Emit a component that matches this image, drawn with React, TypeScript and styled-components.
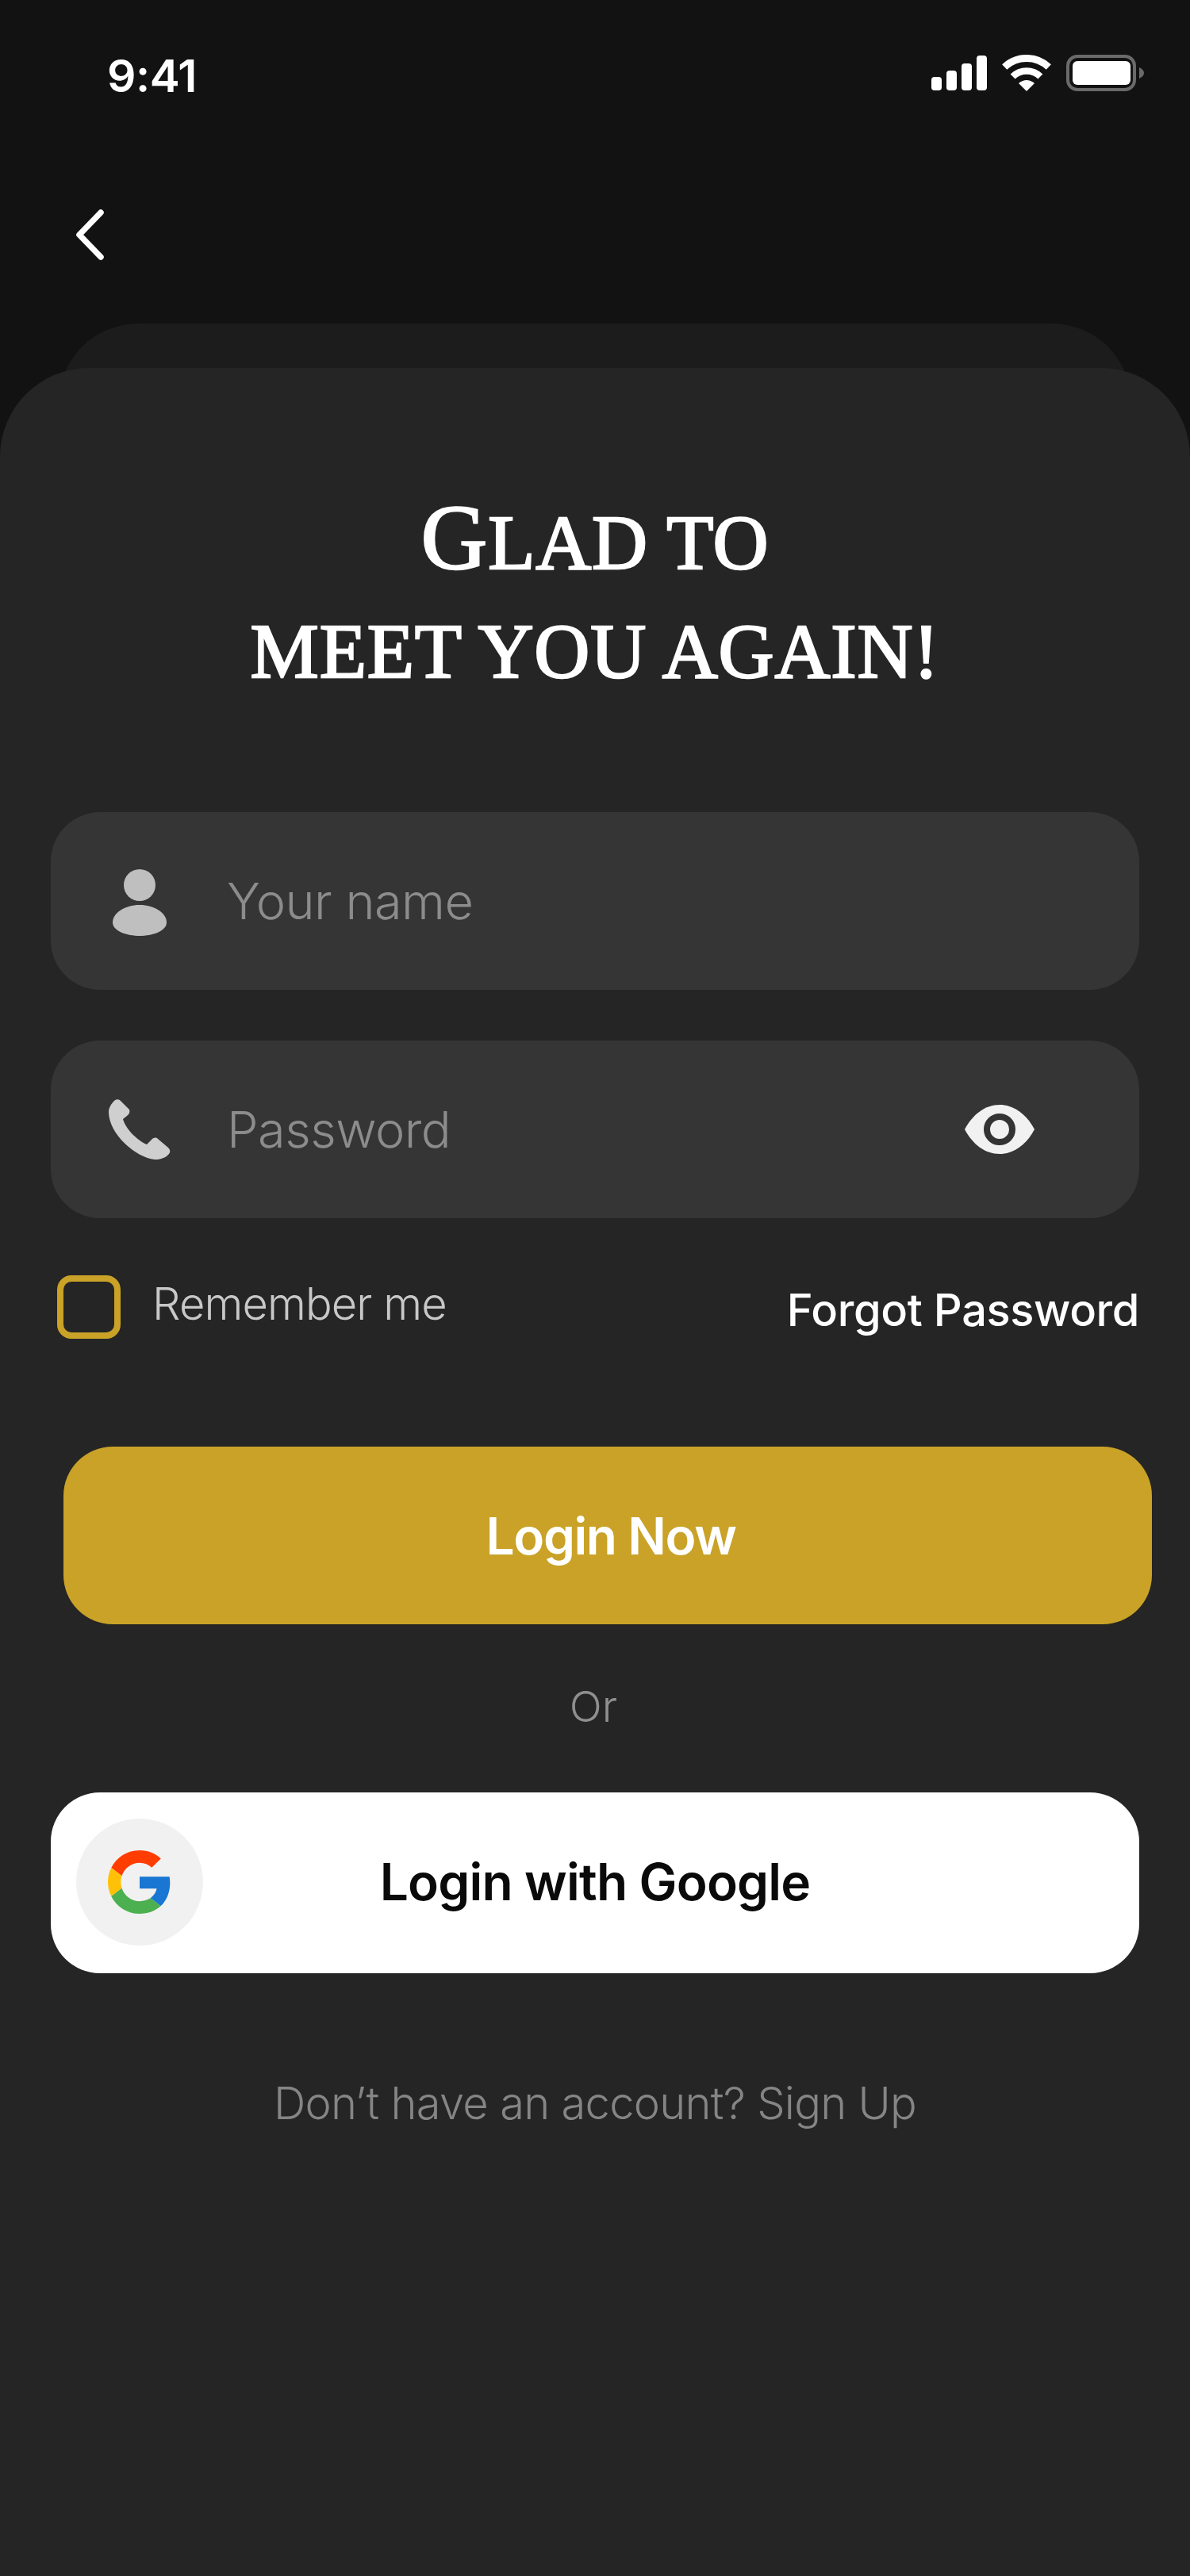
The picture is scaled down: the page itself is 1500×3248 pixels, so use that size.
import React from "react";
import styled, { createGlobalStyle } from "styled-components";

const Global = createGlobalStyle`
  html, body { margin: 0; padding: 0; background: #121212; }
  * { box-sizing: border-box; }
`;

const Page = styled.div`
  width: 1500px;
  height: 3248px;
  background: #121212;
  display: flex;
  flex-direction: column;
  overflow: hidden;
  font-family: Inter, "Liberation Sans", sans-serif;
`;

const StatusBar = styled.div`
  height: 190px;
  flex: none;
  padding: 0 58px 0 135px;
  display: flex;
  align-items: center;
  justify-content: space-between;
`;

const Clock = styled.span`
  font-size: 57px;
  font-weight: 600;
  color: #fff;
  letter-spacing: -0.5px;
`;

const StatusIcons = styled.div`
  display: flex;
  align-items: center;
  gap: 19px;
  margin-bottom: 6px;
`;

const BackRow = styled.div`
  height: 218px;
  flex: none;
  padding: 68px 0 0 92px;
`;

const BackCard = styled.div`
  flex: none;
  height: 160px;
  margin: 0 74px;
  background: #1c1c1c;
  border-radius: 100px 100px 0 0;
`;

const Sheet = styled.main`
  flex: 1;
  margin-top: -104px;
  background: #252525;
  border-radius: 112px 112px 0 0;
  padding: 152px 64px 0;
  display: flex;
  flex-direction: column;
  position: relative;
`;

const Title = styled.h1`
  margin: 0 0 146px;
  text-align: center;
  font-family: "Liberation Serif", serif;
  font-weight: 400;
  font-size: 97px;
  line-height: 137px;
  letter-spacing: 0.8px;
  text-transform: uppercase;
  color: #fff;
  height: 262px;
  -webkit-text-stroke: 2.4px #fff;
`;

const TitleCap = styled.span`
  font-size: 116px;
  line-height: 0;
`;

const Field = styled.div`
  height: 224px;
  border-radius: 62px;
  background: #353535;
  display: flex;
  align-items: center;
  margin-bottom: 64px;
  padding-right: 132px;
`;

const FieldIcon = styled.div<{ $inset: number; $drop?: number }>`
  width: 222px;
  padding-left: ${(p) => p.$inset}px;
  padding-top: ${(p) => p.$drop ?? 0}px;
  flex: none;
  display: flex;
  align-items: center;
`;

const Placeholder = styled.span`
  flex: 1;
  font-size: 63px;
  font-weight: 300;
  letter-spacing: -0.5px;
  color: #8c8c8c;
`;

const OptionsRow = styled.div`
  display: flex;
  justify-content: space-between;
  align-items: center;
  margin-top: 8px;
  height: 80px;
`;

const RememberWrap = styled.label`
  display: flex;
  align-items: center;
  gap: 40px;
  padding-left: 8px;
`;

const Checkbox = styled.span`
  width: 80px;
  height: 80px;
  border: 8px solid #c9a227;
  border-radius: 18px;
  display: block;
`;

const RememberText = styled.span`
  font-size: 56px;
  font-weight: 300;
  letter-spacing: -0.9px;
  color: #c8c8c8;
  margin-bottom: 8px;
`;

const Forgot = styled.a`
  font-size: 56px;
  font-weight: 500;
  letter-spacing: -0.4px;
  color: #fff;
  margin-top: 8px;
`;

const LoginButton = styled.button`
  height: 224px;
  margin: 136px -16px 0 16px;
  border: 0;
  border-radius: 62px;
  background: #c9a227;
  color: #fff;
  font-family: inherit;
  font-size: 64px;
  font-weight: 600;
  letter-spacing: -1.4px;
  padding: 0 0 0 8px;
`;

const Or = styled.div`
  text-align: center;
  margin: 70px 0 0;
  height: 142px;
  line-height: 68px;
  font-size: 54px;
  font-weight: 300;
  color: #8f8f8f;
  padding-right: 4px;
`;

const GoogleButton = styled.button`
  height: 228px;
  position: relative;
  border: 0;
  border-radius: 62px;
  background: #fff;
  color: #0a0a0a;
  font-family: inherit;
  font-size: 64px;
  font-weight: 600;
  letter-spacing: -0.8px;
  padding: 0 0 4px;
`;

const GoogleBadge = styled.span`
  position: absolute;
  left: 32px;
  top: 33px;
  width: 160px;
  height: 160px;
  border-radius: 50%;
  background: #f1f1f1;
  display: flex;
  align-items: center;
  justify-content: center;
`;

const SignUp = styled.p`
  margin: 130px 0 0;
  text-align: center;
  font-size: 56px;
  font-weight: 300;
  letter-spacing: -0.7px;
  color: #858585;
`;

const Signal = () => (
  <svg width="70" height="44" viewBox="0 0 70 44" fill="#fff">
    <rect x="0" y="27" width="13" height="17" rx="4" />
    <rect x="19" y="19" width="13" height="25" rx="4" />
    <rect x="38" y="10" width="13" height="34" rx="4" />
    <rect x="57" y="0" width="13" height="44" rx="4" />
  </svg>
);

const Wifi = () => (
  <svg width="62" height="46" viewBox="0 0 62 46" fill="none">
    <path d="M3.2 15.5A40.5 40.5 0 0 1 58.8 15.5" stroke="#fff" strokeWidth="9" />
    <path d="M13.6 27.5A25 25 0 0 1 48.4 27.5" stroke="#fff" strokeWidth="8.5" />
    <path d="M31 46L21 36Q31 28 41 36Z" fill="#fff" />
  </svg>
);

const Battery = () => (
  <svg width="98" height="46" viewBox="0 0 98 46">
    <rect x="2" y="2" width="84" height="42" rx="12" fill="none" stroke="#6a6a6a" strokeWidth="4" />
    <rect x="8" y="8" width="73" height="30" rx="6" fill="#fff" />
    <path d="M92 16C96 18 98 20 98 23C98 26 96 28 92 30Z" fill="#6a6a6a" />
  </svg>
);

const Chevron = () => (
  <svg width="44" height="76" viewBox="0 0 44 76" fill="none">
    <path d="M35 10L8 38L35 66" stroke="#fff" strokeWidth="7.5" strokeLinecap="round" strokeLinejoin="round" />
  </svg>
);

const PersonIcon = () => (
  <svg width="68" height="84" viewBox="0 0 68 84" fill="#bfbfbf">
    <ellipse cx="34" cy="20" rx="20" ry="20" />
    <path d="M34 45C52 45 68 55 68 67C68 78 50 84 34 84C18 84 0 78 0 67C0 55 16 45 34 45Z" />
  </svg>
);

const PhoneIcon = () => (
  <svg width="78" height="78" viewBox="0 0 78 78" fill="#cfcfcf">
    <path d="M7 3C10 0 14 1 16 4L26 14C27 17 26 20 23 22L18 26C21 38 36 53 48 58L54 52C57 49 60 49 62 51L75 62C78 65 78 68 75 71C71 75 65 77 58 77C35 75 0 45 0 17C0 12 3 7 7 3Z" />
  </svg>
);

const EyeIcon = () => (
  <svg width="88" height="62" viewBox="0 0 88 62">
    <path d="M0 31C10 12 26 0 44 0C62 0 78 12 88 31C78 50 62 62 44 62C26 62 10 50 0 31Z" fill="#f1f1f1" />
    <circle cx="44" cy="31" r="16" fill="#f1f1f1" stroke="#333" strokeWidth="8" />
  </svg>
);

const GoogleLogo = () => (
  <svg width="80" height="82" viewBox="0 0 48 48">
    <path fill="#FF3D00" d="M24 9.5c3.54 0 6.71 1.22 9.21 3.6l6.85-6.85C35.9 2.38 30.47 0 24 0 14.62 0 6.51 5.38 2.56 13.22l7.98 6.19C12.43 13.72 17.74 9.5 24 9.5z" />
    <path fill="#1976D2" d="M46.98 24.55c0-1.57-.15-3.09-.38-4.55H24v9.02h12.94c-.58 2.96-2.26 5.48-4.78 7.18l7.73 6c4.51-4.18 7.09-10.36 7.09-17.65z" />
    <path fill="#FFC107" d="M10.53 28.59c-.48-1.45-.76-2.99-.76-4.59s.27-3.14.76-4.59l-7.98-6.19C.92 16.46 0 20.12 0 24c0 3.88.92 7.54 2.56 10.78l7.97-6.19z" />
    <path fill="#4CAF50" d="M24 48c6.48 0 11.93-2.13 15.89-5.81l-7.73-6c-2.15 1.45-4.92 2.3-8.16 2.3-6.26 0-11.57-4.22-13.47-9.91l-7.98 6.19C6.51 42.62 14.62 48 24 48z" />
  </svg>
);

export default function App() {
  return (
    <Page>
      <Global />
      <StatusBar>
        <Clock>9:41</Clock>
        <StatusIcons>
          <Signal />
          <Wifi />
          <Battery />
        </StatusIcons>
      </StatusBar>
      <BackRow>
        <Chevron />
      </BackRow>
      <BackCard />
      <Sheet>
        <Title>
          <TitleCap>G</TitleCap>lad to
          <br />
          meet you again!
        </Title>
        <Field>
          <FieldIcon $inset={78} $drop={3}>
            <PersonIcon />
          </FieldIcon>
          <Placeholder>Your name</Placeholder>
        </Field>
        <Field>
          <FieldIcon $inset={73}>
            <PhoneIcon />
          </FieldIcon>
          <Placeholder>Password</Placeholder>
          <EyeIcon />
        </Field>
        <OptionsRow>
          <RememberWrap>
            <Checkbox />
            <RememberText>Remember me</RememberText>
          </RememberWrap>
          <Forgot>Forgot Password</Forgot>
        </OptionsRow>
        <LoginButton>Login Now</LoginButton>
        <Or>Or</Or>
        <GoogleButton>
          <GoogleBadge>
            <GoogleLogo />
          </GoogleBadge>
          Login with Google
        </GoogleButton>
        <SignUp>Don’t have an account? Sign Up</SignUp>
      </Sheet>
    </Page>
  );
}
